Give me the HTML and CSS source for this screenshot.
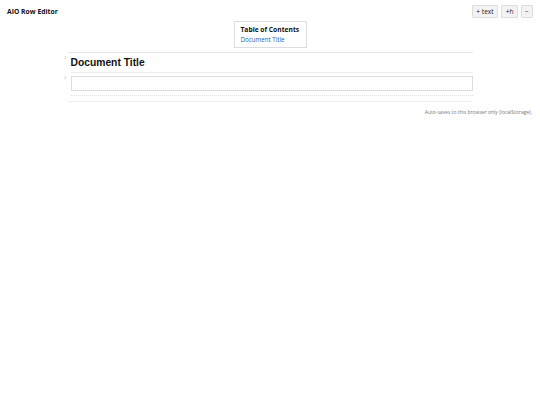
FILE: index.html
```html
<!DOCTYPE html>
<html>
<head>
<meta charset="utf-8">
<link rel="stylesheet" href="styles.css">
</head>
<body>
<header class="topbar">
  <div class="app-title">AIO Row Editor</div>
  <div class="actions">
    <button class="btn">+ text</button>
    <button class="btn">+h</button>
    <button class="btn">−</button>
  </div>
</header>
<nav class="toc">
  <div class="toc-title">Table of Contents</div>
  <a class="toc-link" href="#">Document Title</a>
</nav>
<main class="doc">
  <div class="row">
    <span class="row-num">1</span>
    <h1 class="doc-title">Document Title</h1>
  </div>
  <div class="row row-input">
    <span class="row-num">2</span>
    <div class="input-wrap">
      <div class="text-input"></div>
      <div class="dots"></div>
    </div>
  </div>
</main>
<footer class="note">Auto-saves to this browser only (localStorage).</footer>
</body>
</html>
```
FILE: styles.css
```css
html, body { margin: 0; padding: 0; background: #fff; }
body { font-family: "Open Sans", "Noto Sans", sans-serif; color: #222; width: 540px; }
.topbar { display: flex; justify-content: space-between; align-items: center; padding: 5px 7px 0 7px; height: 13px; }
.app-title { font-weight: 700; font-size: 6.8px; color: #111; }
.actions { display: flex; gap: 3px; }
.btn { font-family: "Open Sans", "Noto Sans", sans-serif; font-size: 6.6px; height: 13px; padding: 0 3.5px; background: #f3f3f3; border: 1px solid #ddd; border-radius: 1px; color: #222; line-height: 11px; margin: 0; }
.btn:last-child { padding: 0 3px; min-width: 12px; }
.toc { width: 59px; margin: 3px auto 0; border: 1px solid #ddd; padding: 2px 6px 3px; box-sizing: content-box; }
.toc-title { font-weight: 700; font-size: 6.7px; line-height: 11px; color: #111; white-space: nowrap; }
.toc-link { display: block; font-size: 6.2px; line-height: 9px; color: #1a5fb4; text-decoration: none; white-space: nowrap; }
.doc { width: 405px; margin: 4px auto 0; border-top: 1px solid #e6e6e6; border-bottom: 1px solid #eee; }
.row { position: relative; padding-left: 3px; }
.row-num { position: absolute; left: -3px; top: 3px; font-size: 3.5px; color: #aaa; font-family: "Liberation Sans", sans-serif; }
.doc-title { margin: 0; font-family: "Liberation Sans", Arial, sans-serif; font-weight: 700; font-size: 10.3px; line-height: 19px; color: #111; border-bottom: 1px solid #eee; }
.row-input { padding-top: 3px; padding-bottom: 5px; }
.text-input { height: 13px; border: 1px solid #ddd; }
.dots { margin-top: 4px; border-top: 1px dotted #e2e2e2; }
.note { text-align: right; font-size: 5px; color: #777; padding: 7px 8px 0 0; }
```
